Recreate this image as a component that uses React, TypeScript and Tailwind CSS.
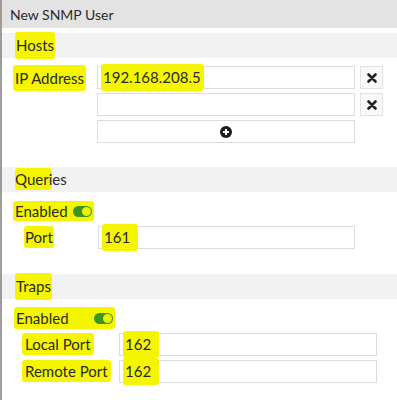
import React from "react";

const font = { fontFamily: "Lato, 'Open Sans', sans-serif" };

function Mark({ children, className = "" }: { children: React.ReactNode; className?: string }) {
  return <span className={`bg-[#f5f500] rounded-[3px] ${className}`}>{children}</span>;
}

function SectionBar({ children }: { children: React.ReactNode }) {
  return (
    <div className="h-[25px] bg-[#f2f2f2] flex items-center pl-[13px] text-[15px]">{children}</div>
  );
}

function Toggle() {
  return (
    <span className="inline-flex items-center w-[19px] h-[11px] rounded-full bg-[#3f9320] justify-end pr-[1px]">
      <span className="w-[9px] h-[9px] rounded-full bg-[#e9f200]" />
    </span>
  );
}

function Field({ value, width, markClass = "px-[2px]" }: { value?: string; width: string; markClass?: string }) {
  return (
    <div className={`${width} h-[23px] border border-[#dcdcdc] bg-white flex items-center pl-[3px] text-[15px]`}>
      {value ? <Mark className={`py-[2px] ${markClass}`}>{value}</Mark> : null}
    </div>
  );
}

function RemoveButton() {
  return (
    <div className="w-[23px] h-[23px] border border-[#e2e2e2] bg-[#f9f9f9] flex items-center justify-center">
      <svg width="10" height="10" viewBox="0 0 10 10">
        <path d="M1.5 1.5 L8.5 8.5 M8.5 1.5 L1.5 8.5" stroke="#222" strokeWidth="2.6" strokeLinecap="round" />
      </svg>
    </div>
  );
}

export default function App() {
  return (
    <div className="w-[397px] h-[400px] bg-white border-l-2 border-[#9c9c9c] text-[#2a2a2a]" style={font}>
      <div className="h-[28px] bg-[#e3e3e3] flex items-center pl-[8px] text-[14px] text-[#2b2b2b]">New SNMP User</div>

      <div className="mt-[5px]">
        <SectionBar>
          <Mark className="px-[1px] py-[2px]">Hosts</Mark>
        </SectionBar>
      </div>

      <div className="flex mt-[8px]">
        <div className="w-[95px] pl-[11px] pt-[1px] text-[15px]">
          <Mark className="px-[2px] py-[4px]">IP Address</Mark>
        </div>
        <div className="flex flex-col gap-[4px]">
          <div className="flex gap-[5px]">
            <Field width="w-[258px]" value="192.168.208.5" markClass="pl-[2px] pr-[3px]" />
            <RemoveButton />
          </div>
          <div className="flex gap-[5px]">
            <Field width="w-[258px]" />
            <RemoveButton />
          </div>
          <div className="w-[258px] h-[23px] border border-[#dcdcdc] bg-white flex items-center justify-center">
            <svg width="12" height="12" viewBox="0 0 12 12">
              <circle cx="6" cy="6" r="6" fill="#1e1e1e" />
              <path d="M6 3 V9 M3 6 H9" stroke="#fff" strokeWidth="2" />
            </svg>
          </div>
        </div>
      </div>

      <div className="mt-[24px]">
        <SectionBar>
          <span>
            <Mark className="py-[2px]">Queri</Mark>es
          </span>
        </SectionBar>
      </div>

      <div className="mt-[9px] h-[20px] flex items-center pl-[11px] text-[15px]">
        <Mark className="flex items-center gap-[5px] px-[2px] h-[20px]">
          Enabled
          <Toggle />
        </Mark>
      </div>

      <div className="flex items-center mt-[5px]">
        <div className="w-[96px] pl-[22px] text-[15px]">
          <Mark className="px-[1px] py-[2px]">Port</Mark>
        </div>
        <Field width="w-[257px]" value="161" markClass="pl-[2px] pr-[8px]" />
      </div>

      <div className="mt-[25px]">
        <SectionBar>
          <Mark className="px-[1px] py-[2px]">Traps</Mark>
        </SectionBar>
      </div>

      <div className="mt-[8px] h-[22px] flex items-center pl-[12px] text-[15px]">
        <Mark className="flex items-center gap-[25px] px-[2px] h-[22px]">
          Enabled
          <Toggle />
        </Mark>
      </div>

      <div className="flex flex-col gap-[4px] mt-[4px]">
        <div className="flex items-center">
          <div className="w-[117px] pl-[20px] text-[15px]">
            <Mark className="px-[3px] py-[2px]">Local Port</Mark>
          </div>
          <Field width="w-[258px]" value="162" markClass="pl-[2px] pr-[8px]" />
        </div>
        <div className="flex items-center">
          <div className="w-[117px] pl-[20px] text-[15px]">
            <Mark className="px-[3px] py-[2px]">Remote Port</Mark>
          </div>
          <Field width="w-[258px]" value="162" markClass="pl-[2px] pr-[8px]" />
        </div>
      </div>
    </div>
  );
}
